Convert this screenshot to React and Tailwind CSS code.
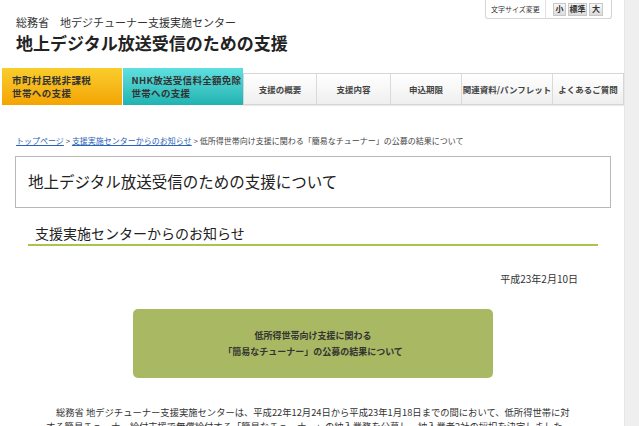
import React from "react";

const font = { fontFamily: '"Noto Sans CJK JP", "Noto Sans", sans-serif' };

const tabs = [
  { label: "支援の概要", w: "w-[72px]" },
  { label: "支援内容", w: "w-[74px]" },
  { label: "申込期限", w: "w-[71px]" },
  { label: "関連資料/パンフレット", w: "w-[91px]" },
  { label: "よくあるご質問", w: "w-[71px]" },
];

function SizeButton({ children, w }) {
  return (
    <span className={`flex h-[13px] ${w} items-center justify-center border border-[#c8c8c8] bg-gradient-to-b from-[#f8f8f8] to-[#dcdcdc] text-[8px] font-bold leading-none text-[#333]`}>
      {children}
    </span>
  );
}

export default function App() {
  return (
    <div className="flex h-[426px] w-[639px] overflow-hidden bg-[#efefef] text-[#333]" style={font}>
      <div className="w-[624px] shrink-0 bg-white">
        {/* header */}
        <div className="relative h-[68px]">
          <div className="absolute right-[12px] top-0 flex h-[19px] w-[127px] items-center rounded-b-[3px] border border-t-0 border-[#d4d4d4] bg-white">
            <span className="w-[60px] border-r border-[#e2e2e2] pl-[5px] text-[7px] leading-[19px]">文字サイズ変更</span>
            <div className="flex items-center gap-[2px] pl-[7px]">
              <SizeButton w="w-[13px]">小</SizeButton>
              <SizeButton w="w-[19px]">標準</SizeButton>
              <SizeButton w="w-[14px]">大</SizeButton>
            </div>
          </div>
          <div className="pl-[16px] pt-[14px]">
            <p className="text-[11px] leading-[16px]">総務省　地デジチューナー支援実施センター</p>
            <h1 className="mt-[1px] text-[17px] font-bold leading-[24px] text-[#222]">地上デジタル放送受信のための支援</h1>
          </div>
        </div>

        {/* global nav */}
        <div className="flex items-end pl-[2px]">
          <div className="flex h-[37px] w-[120px] flex-col justify-center bg-gradient-to-b from-[#f9cd2a] to-[#f4a400] pl-[10px] text-[9.5px] font-semibold leading-[13px] tracking-[0.4px]">
            <span>市町村民税非課税</span>
            <span>世帯への支援</span>
          </div>
          <div className="ml-px flex h-[37px] w-[121px] flex-col justify-center bg-gradient-to-b from-[#5fe0e0] to-[#1db3b1] pl-[9px] text-[9.5px] font-semibold leading-[13px] tracking-[0.3px]">
            <span>NHK放送受信料全額免除</span>
            <span>世帯への支援</span>
          </div>
          <div className="flex h-[32px] border border-[#d6d6d6] shadow-[0_1px_1px_rgba(0,0,0,0.08)]">
            {tabs.map((t, i) => (
              <div
                key={i}
                className={`flex ${t.w} items-center justify-center whitespace-nowrap bg-gradient-to-b from-white to-[#efefef] text-[8.5px] font-semibold text-[#444] ${i > 0 ? "border-l border-[#dadada]" : ""}`}
              >
                {t.label}
              </div>
            ))}
          </div>
        </div>

        {/* breadcrumb */}
        <div className="mt-[30px] pl-[16px] text-[8px] leading-[12px] text-[#444]">
          <a href="#" className="text-[#2a62b8] underline">トップページ</a>
          <span> &gt; </span>
          <a href="#" className="text-[#2a62b8] underline">支援実施センターからのお知らせ</a>
          <span> &gt; 低所得世帯向け支援に関わる「簡易なチューナー」の公募の結果について</span>
        </div>

        {/* page title */}
        <div className="ml-[15px] mt-[9px] flex h-[52px] w-[596px] items-center border border-[#b8b8b8] pl-[12px]">
          <h2 className="text-[15.5px] leading-none text-[#222]">地上デジタル放送受信のための支援について</h2>
        </div>

        {/* section heading */}
        <div className="ml-[28px] mt-[15px] w-[570px] border-b-2 border-[#a9c44c] pb-[1px] pl-[7px]">
          <h3 className="text-[14px] leading-[20px] text-[#222]">支援実施センターからのお知らせ</h3>
        </div>

        <p className="mt-[27px] pr-[46px] text-right text-[10px] leading-[12px]">平成23年2月10日</p>

        <div className="ml-[133px] mt-[24px] flex h-[69px] w-[360px] flex-col items-center justify-center rounded-[5px] bg-[#a9b862] text-[9px] font-bold leading-[16px] text-[#333]">
          <span>低所得世帯向け支援に関わる</span>
          <span>「簡易なチューナー」の公募の結果について</span>
        </div>

        <p className="mt-[27px] pl-[46px] pr-[48px] indent-[10px] text-[9.3px] leading-[14px]">
          総務省 地デジチューナー支援実施センターは、平成22年12月24日から平成23年1月18日までの間において、低所得世帯に対する簡易チューナー給付支援で無償給付する「簡易なチューナー」の納入業務を公募し、納入業者2社の採択を決定しました。
        </p>
      </div>
      <div className="flex-1 border-l border-[#e6e6e6]"></div>
    </div>
  );
}
